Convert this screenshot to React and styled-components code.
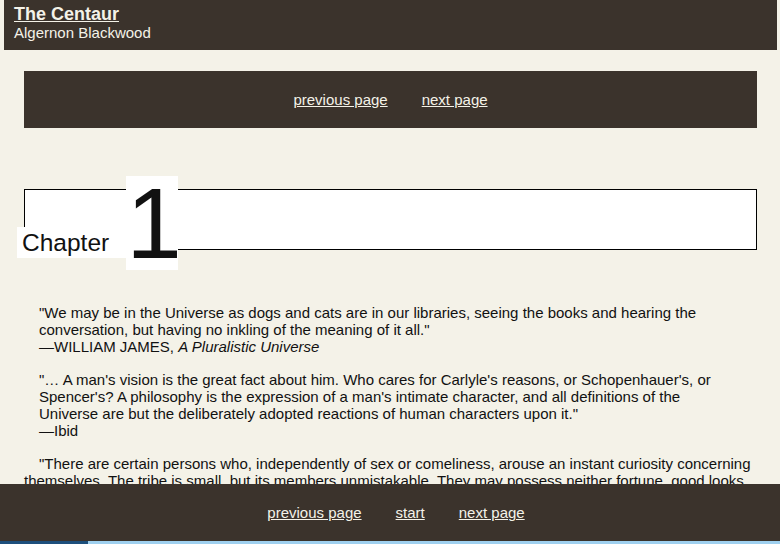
import React from "react";
import styled, { createGlobalStyle } from "styled-components";

const Global = createGlobalStyle`
  html, body { margin: 0; padding: 0; background: #f4f2e8; }
  body { font-family: "Liberation Sans", Arial, sans-serif; color: #111; }
`;

const dark = "#3b332c";
const cream = "#f4f2e8";

const Page = styled.div`
  padding: 0 3px 80px 4px;
`;

const Header = styled.header`
  background: ${dark};
  height: 50px;
  padding: 4px 10px 0;
  box-sizing: border-box;
  color: ${cream};
`;

const Title = styled.a`
  display: block;
  width: max-content;
  font-size: 18px;
  font-weight: bold;
  line-height: 20px;
  color: ${cream};
  text-decoration: underline;
`;

const Author = styled.div`
  font-size: 15px;
  line-height: 18px;
`;

const Nav = styled.nav`
  background: ${dark};
  display: flex;
  justify-content: center;
  align-items: center;
  gap: 34px;
  height: 57px;
  margin: ${(p) => (p.$footer ? "0" : "21px 20px 0")};
  padding-left: ${(p) => (p.$footer ? "12px" : "0")};
`;

const NavLink = styled.a`
  color: ${cream};
  font-size: 15px;
  text-decoration: underline;
`;

const ChapterBox = styled.h2`
  margin: 61px 20px 0;
  height: 59px;
  border: 1px solid #000;
  background: #fff;
  display: flex;
  align-items: flex-end;
  font-weight: normal;
`;

const ChapterLabel = styled.span`
  background: #fff;
  font-size: 24.5px;
  line-height: 31px;
  padding: 0 17px 0 5px;
  margin: 0 0 -9px -8px;
`;

const ChapterNum = styled.span`
  background: #fff;
  font-size: 100px;
  line-height: 94px;
  width: 52px;
  text-align: center;
  margin-bottom: -21px;
`;

const Body = styled.div`
  margin: 54px 20px 0;
  font-size: 15px;
  line-height: 17px;
`;

const Quote = styled.p`
  margin: 0 20px 16px 15px;
`;

const Para = styled.p`
  margin: 0 0 16px;
  text-indent: 15px;
`;

const Footer = styled.div`
  position: fixed;
  left: 0;
  right: 0;
  bottom: 3px;
`;

const Taskbar = styled.div`
  position: fixed;
  left: 0;
  right: 0;
  bottom: 0;
  height: 3px;
  background: linear-gradient(to right, #1d4f7c 0 88px, #9fd0ef 88px);
`;

export default function App() {
  return (
    <>
      <Global />
      <Page>
        <Header>
          <Title href="#">The Centaur</Title>
          <Author>Algernon Blackwood</Author>
        </Header>
        <Nav>
          <NavLink href="#">previous page</NavLink>
          <NavLink href="#">next page</NavLink>
        </Nav>
        <ChapterBox>
          <ChapterLabel>Chapter</ChapterLabel>
          <ChapterNum>1</ChapterNum>
        </ChapterBox>
        <Body>
          <Quote>
            "We may be in the Universe as dogs and cats are in our libraries, seeing the books and hearing the conversation, but having no inkling of the meaning of it all."
            <br />—WILLIAM JAMES, <i>A Pluralistic Universe</i>
          </Quote>
          <Quote>
            "… A man's vision is the great fact about him. Who cares for Carlyle's reasons, or Schopenhauer's, or Spencer's? A philosophy is the expression of a man's intimate character, and all definitions of the Universe are but the deliberately adopted reactions of human characters upon it."
            <br />—Ibid
          </Quote>
          <Para>
            "There are certain persons who, independently of sex or comeliness, arouse an instant curiosity concerning themselves. The tribe is small, but its members unmistakable. They may possess neither fortune, good looks, nor any obvious talent, yet the moment they come into a room people turn to look at them, and wonder who they are."
          </Para>
        </Body>
      </Page>
      <Footer>
        <Nav $footer>
          <NavLink href="#">previous page</NavLink>
          <NavLink href="#">start</NavLink>
          <NavLink href="#">next page</NavLink>
        </Nav>
      </Footer>
      <Taskbar />
    </>
  );
}
